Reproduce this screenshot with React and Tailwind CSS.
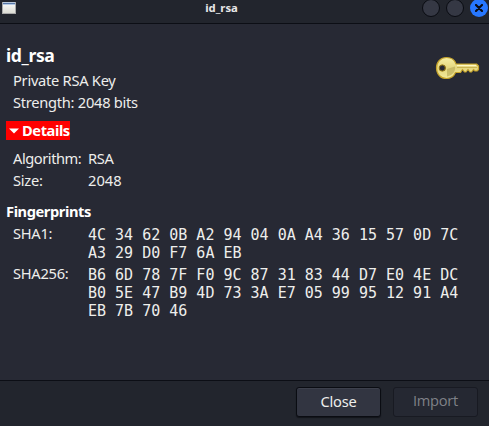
const SHA1 = [
  "4C 34 62 0B A2 94 04 0A A4 36 15 57 0D 7C",
  "A3 29 D0 F7 6A EB",
];
const SHA256 = [
  "B6 6D 78 7F F0 9C 87 31 83 44 D7 E0 4E DC",
  "B0 5E 47 B9 4D 73 3A E7 05 99 95 12 91 A4",
  "EB 7B 70 46",
];

function KeyIcon() {
  return (
    <svg width="45" height="24" viewBox="0 0 45 24" className="mt-[32px] shrink-0">
      <defs>
        <linearGradient id="gold" x1="0" y1="0" x2="0" y2="1">
          <stop offset="0" stopColor="#f7efa5" />
          <stop offset="0.5" stopColor="#e5d77f" />
          <stop offset="1" stopColor="#f3e99a" />
        </linearGradient>
      </defs>
      <path
        fillRule="evenodd"
        d="M11.5 1.5C17 1.5 20 4.500 21 8H41.500L43.500 10V13.500L42 15H40L38.500 13.500L36.500 16H35L33 13.500L31 16H29.500L27.500 13.500L25.500 16.500H20.500C19 20 15.500 22.500 11.500 22.500C5.500 22.500 1.500 18 1.500 12S5.500 1.500 11.500 1.500ZM7.300 9A3 3 0 1 0 7.300 15A3 3 0 1 0 7.300 9Z"
        fill="url(#gold)"
        stroke="#c5a32b"
        strokeWidth="1.2"
        strokeLinejoin="round"
      />
      <path d="M12 13L20 10.500C20.500 15 18.500 19 12 20.500Z" fill="#b9ab58" opacity="0.65" />
      <path d="M22 11.500H42" stroke="#c9b452" strokeWidth="1" />
      <path d="M22 9.500H41" stroke="#fff8c4" strokeWidth="1" />
      <circle cx="7.300" cy="12" r="3" fill="#272934" stroke="#8a721e" strokeWidth="1" />
    </svg>
  );
}

function WindowIcon() {
  return (
    <div className="ml-[2px] mt-[2px] h-3 w-[14px] border-x border-b border-[#aaa] bg-linear-to-b from-white to-[#dcdcd4]">
      <div className="h-[2px] border-t border-[#b9c9dc] bg-[#5878a8]" />
      <div className="h-px bg-[#b8cce6]" />
    </div>
  );
}

function Hex({ lines }) {
  return (
    <div className="whitespace-pre font-['DejaVu_Sans_Mono',monospace] text-[15px] leading-[18px] tracking-normal">
      {lines.map((line) => (
        <div key={line}>{line}</div>
      ))}
    </div>
  );
}

export default function App() {
  return (
    <div className="flex h-[426px] w-[489px] flex-col overflow-hidden bg-[#272934] font-['Noto_Sans',sans-serif] text-[14.667px] leading-[22px] tracking-[-0.27px] text-[#eeeeec]">
      <header className="flex h-6 shrink-0 border-b border-[#0c0e15] bg-[#22252d]">
        <WindowIcon />
        <h1 className="grow pl-[5px] text-center text-[11.300px] font-bold leading-4 tracking-normal text-[#e8e8e8]">id_rsa</h1>
        <div className="flex justify-end gap-[6px] pr-px">
          <i className="-mt-px size-[18px] rounded-full border border-[#0a0c12] bg-[#353844]" />
          <i className="-mt-px size-[18px] rounded-full border border-[#0a0c12] bg-[#353844]" />
          <i className="-mt-px flex size-[18px] items-center justify-center rounded-full bg-[#2777ff]">
            <svg width="8" height="8" viewBox="0 0 8 8">
              <path d="M1 1L7 7M7 1L1 7" stroke="#090c16" strokeWidth="2.200" strokeLinecap="round" />
            </svg>
          </i>
        </div>
      </header>

      <main className="flex grow pl-[6px] pr-[9px]">
        <div className="w-[429px] shrink-0">
          <h2 className="mt-[19px] text-[17.600px] font-bold leading-6 tracking-[-0.4px] text-white">id_rsa</h2>
          <div className="mt-[2px] pl-[7px]">
            <p>Private RSA Key</p>
            <p>Strength: 2048 bits</p>
          </div>
          <button className="mt-[8px] flex h-[19px] w-16 items-center bg-[#ff0000] pl-[3px] font-bold tracking-[-0.42px] text-white">
            <svg width="10" height="6" viewBox="0 0 10 6" className="shrink-0">
              <path d="M0 0.500H10L5 5.500Z" fill="white" />
            </svg>
            <span className="-mt-[2px] ml-[3px]">Details</span>
          </button>
          <dl className="mt-[7px] grid grid-cols-[75px_auto] pl-[7px]">
            <dt className="tracking-[-0.45px]">Algorithm:</dt>
            <dd>RSA</dd>
            <dt>Size:</dt>
            <dd className="tracking-normal">2048</dd>
          </dl>
          <h3 className="mt-[9px] font-bold tracking-[-0.42px] text-white">Fingerprints</h3>
          <dl className="mt-[4px] grid grid-cols-[75px_auto] gap-y-1 pl-[7px]">
            <dt className="-mt-[2px] leading-[18px]">SHA1:</dt>
            <dd><Hex lines={SHA1} /></dd>
            <dt className="-mt-[2px] leading-[18px]">SHA256:</dt>
            <dd><Hex lines={SHA256} /></dd>
          </dl>
        </div>
        <KeyIcon />
      </main>

      <footer className="flex h-[46px] shrink-0 justify-end gap-3 border-t border-[#0c0e15] bg-[#22252d] pr-[11px] pt-[6px]">
        <button className="h-[30px] w-[85px] rounded-[3px] border border-[#0a0c12] bg-[#323541] pb-[2px] shadow-[inset_0_1px_0_#3d404c,0_1px_1px_#12141a]">Close</button>
        <button className="h-[30px] w-[85px] rounded-[3px] border border-[#181a22] bg-[#252832] pb-[5px] font-['Open_Sans',sans-serif] tracking-[-0.3px] text-[#7f8187]">Import</button>
      </footer>
    </div>
  );
}
